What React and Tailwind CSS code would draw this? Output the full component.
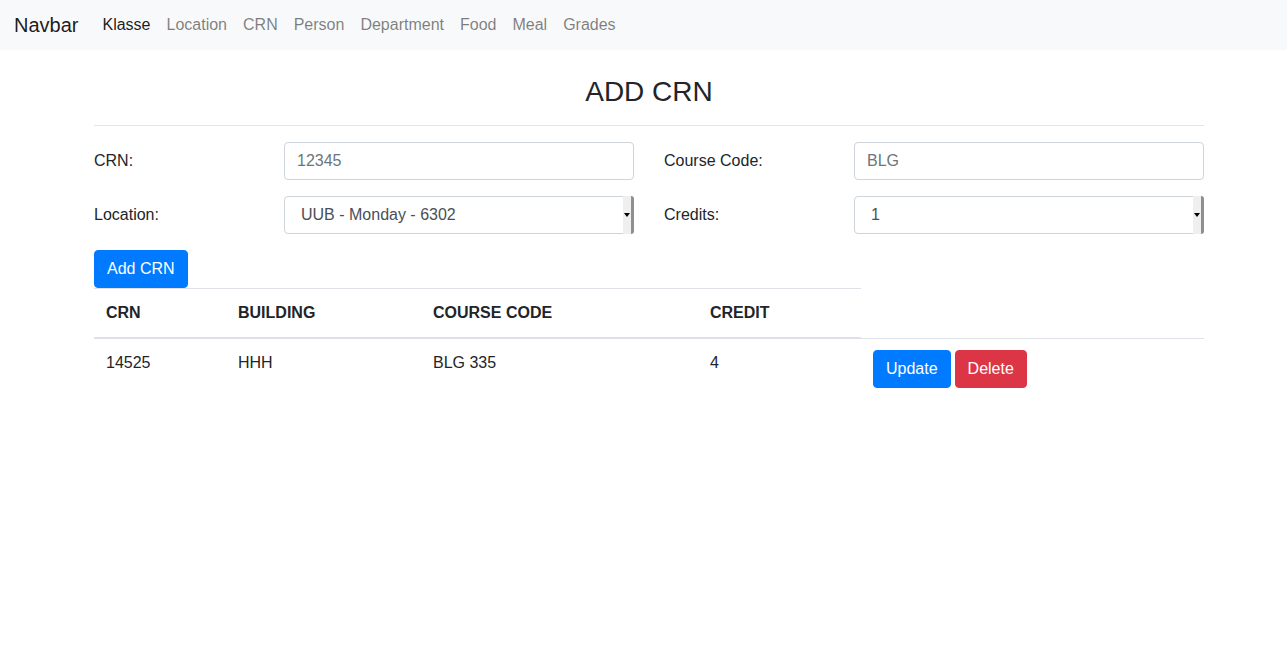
import React from "react";

const links = ["Location", "CRN", "Person", "Department", "Food", "Meal", "Grades"];

function Select({ value }) {
  return (
    <div className="relative flex-1">
      <select className="w-full h-[38px] pl-[16px] pr-3 border border-[#ced4da] rounded bg-white text-[#495057] appearance-none outline-none">
        <option>{value}</option>
      </select>
      {/* native-looking arrow strip */}
      <div className="absolute right-0 top-0 bottom-0 w-[11px] bg-[#efefef] border-r-[3px] border-[#8f8f8f] rounded-r-[3px] flex items-center justify-center">
        <div className="w-0 h-0 border-l-[3px] border-r-[3px] border-t-[4px] border-l-transparent border-r-transparent border-t-black" />
      </div>
    </div>
  );
}

export default function App() {
  return (
    <div className="min-h-screen bg-white text-[#212529] text-base" style={{ fontFamily: '"Liberation Sans", Arial, sans-serif' }}>
      <nav className="h-[50px] bg-[#f8f9fa] flex items-center pl-[14px] pr-4 pb-[1px]">
        <span className="text-xl text-black/90 mr-4 leading-[30px]">Navbar</span>
        <span className="px-2 text-black/90">Klasse</span>
        {links.map((l) => (
          <span key={l} className="px-2 text-black/50">
            {l}
          </span>
        ))}
      </nav>

      <div className="ml-[94px] w-[1110px]">
        <h3 className="mt-[25px] text-[28px] leading-[34px] text-center">ADD CRN</h3>
        <hr className="mt-[16px] border-0 border-t border-black/10" />

        <div className="mt-[16px] grid grid-cols-2 gap-x-[30px] gap-y-[16px]">
          <div className="flex items-center">
            <label className="w-[190px]">CRN:</label>
            <input
              placeholder="12345"
              className="flex-1 h-[38px] px-3 border border-[#ced4da] rounded placeholder:text-[#6c757d] outline-none"
            />
          </div>
          <div className="flex items-center">
            <label className="w-[190px]">Course Code:</label>
            <input
              placeholder="BLG"
              className="flex-1 h-[38px] px-3 border border-[#ced4da] rounded placeholder:text-[#6c757d] outline-none"
            />
          </div>
          <div className="flex items-center">
            <label className="w-[190px]">Location:</label>
            <Select value="UUB - Monday - 6302" />
          </div>
          <div className="flex items-center">
            <label className="w-[190px]">Credits:</label>
            <Select value="1" />
          </div>
        </div>

        <button className="mt-[16px] h-[38px] px-3 border border-[#007bff] bg-[#007bff] text-white rounded">Add CRN</button>

        <table className="w-full border-collapse text-left">
          <colgroup>
            <col className="w-[132px]" />
            <col className="w-[195px]" />
            <col className="w-[277px]" />
            <col className="w-[163px]" />
            <col />
          </colgroup>
          <thead>
            <tr>
              {["CRN", "BUILDING", "COURSE CODE", "CREDIT"].map((h) => (
                <th key={h} className="px-3 py-3 leading-6 font-bold border-t border-b-2 border-[#dee2e6] align-bottom">
                  {h}
                </th>
              ))}
            </tr>
          </thead>
          <tbody>
            <tr>
              <td className="px-3 py-3 leading-6 border-t border-[#dee2e6] align-top">14525</td>
              <td className="px-3 py-3 leading-6 border-t border-[#dee2e6] align-top">HHH</td>
              <td className="px-3 py-3 leading-6 border-t border-[#dee2e6] align-top">BLG 335</td>
              <td className="px-3 py-3 leading-6 border-t border-[#dee2e6] align-top">4</td>
              <td className="px-3 pt-[11px] pb-3 border-t border-[#dee2e6] align-top">
                <div className="flex gap-1">
                  <button className="h-[38px] px-3 border border-[#007bff] bg-[#007bff] text-white rounded">Update</button>
                  <button className="h-[38px] px-3 border border-[#dc3545] bg-[#dc3545] text-white rounded">Delete</button>
                </div>
              </td>
            </tr>
          </tbody>
        </table>
      </div>
    </div>
  );
}
